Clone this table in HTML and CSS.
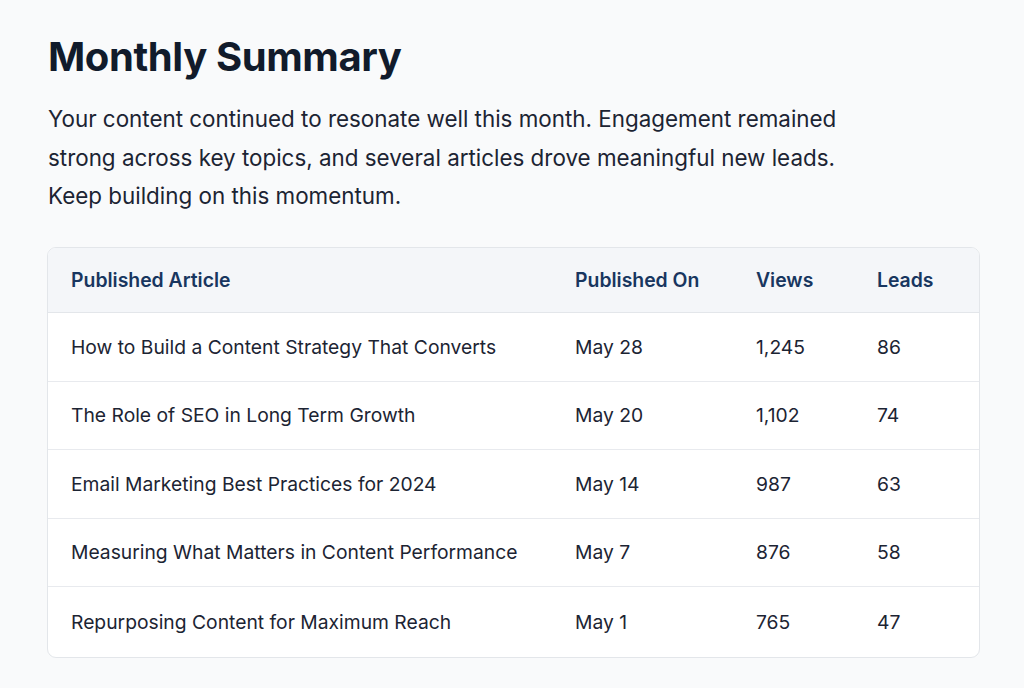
FILE: index.html
```html
<!DOCTYPE html>
<html lang="en">
<head>
<meta charset="utf-8">
<title>Monthly Summary</title>
<link rel="stylesheet" href="styles.css">
</head>
<body>
<main class="page">
  <h1 class="title">Monthly Summary</h1>
  <p class="intro">Your content continued to resonate well this month. Engagement remained strong across key topics, and several articles drove meaningful new leads. Keep building on this momentum.</p>
  <div class="card">
    <table class="report">
      <colgroup>
        <col class="c-article">
        <col class="c-date">
        <col class="c-views">
        <col class="c-leads">
      </colgroup>
      <thead>
        <tr><th>Published Article</th><th>Published On</th><th>Views</th><th>Leads</th></tr>
      </thead>
      <tbody>
        <tr><td>How to Build a Content Strategy That Converts</td><td>May 28</td><td>1,245</td><td>86</td></tr>
        <tr><td>The Role of SEO in Long Term Growth</td><td>May 20</td><td>1,102</td><td>74</td></tr>
        <tr><td>Email Marketing Best Practices for 2024</td><td>May 14</td><td>987</td><td>63</td></tr>
        <tr><td>Measuring What Matters in Content Performance</td><td>May 7</td><td>876</td><td>58</td></tr>
        <tr><td>Repurposing Content for Maximum Reach</td><td>May 1</td><td>765</td><td>47</td></tr>
      </tbody>
    </table>
  </div>
</main>
</body>
</html>
```

FILE: styles.css
```css
* { box-sizing: border-box; }
html, body { margin: 0; padding: 0; }
body {
  background: #f9fafb;
  font-family: Inter, "Noto Sans", sans-serif;
  color: #1c2433;
}
.page {
  padding: 29px 45px 0 47px;
  width: 1024px;
}
.title {
  margin: 0 0 0 1px;
  font-size: 40px;
  font-weight: 700;
  line-height: 56px;
  color: #111b2b;
  letter-spacing: -0.4px;
}
.intro {
  margin: 15px 0 0 1px;
  width: 810px;
  font-size: 22.4px;
  line-height: 38.5px;
  color: #1c2433;
}
.card {
  margin-top: 31px;
  width: 933px;
  background: #ffffff;
  border: 1.5px solid #e3e6ea;
  border-radius: 9px;
  overflow: hidden;
}
.report {
  width: 100%;
  border-collapse: collapse;
  table-layout: fixed;
}
.c-article { width: 527px; }
.c-date { width: 181px; }
.c-views { width: 121px; }
.c-leads { width: auto; }
.report th, .report td {
  text-align: left;
  padding: 0 0 0 23px;
  white-space: nowrap;
}
.report th:not(:first-child), .report td:not(:first-child) { padding-left: 0; }
.report th {
  background: #f4f6f9;
  height: 65px;
  font-size: 19.4px;
  font-weight: 600;
  color: #183660;
  border-bottom: 1.5px solid #e3e6ea;
}
.report td {
  height: 68.5px;
  font-size: 19.3px;
  font-weight: 400;
  color: #1c2433;
  border-bottom: 1.5px solid #e8eaee;
}
.report tbody tr:last-child td { border-bottom: none; height: 70px; }
```
